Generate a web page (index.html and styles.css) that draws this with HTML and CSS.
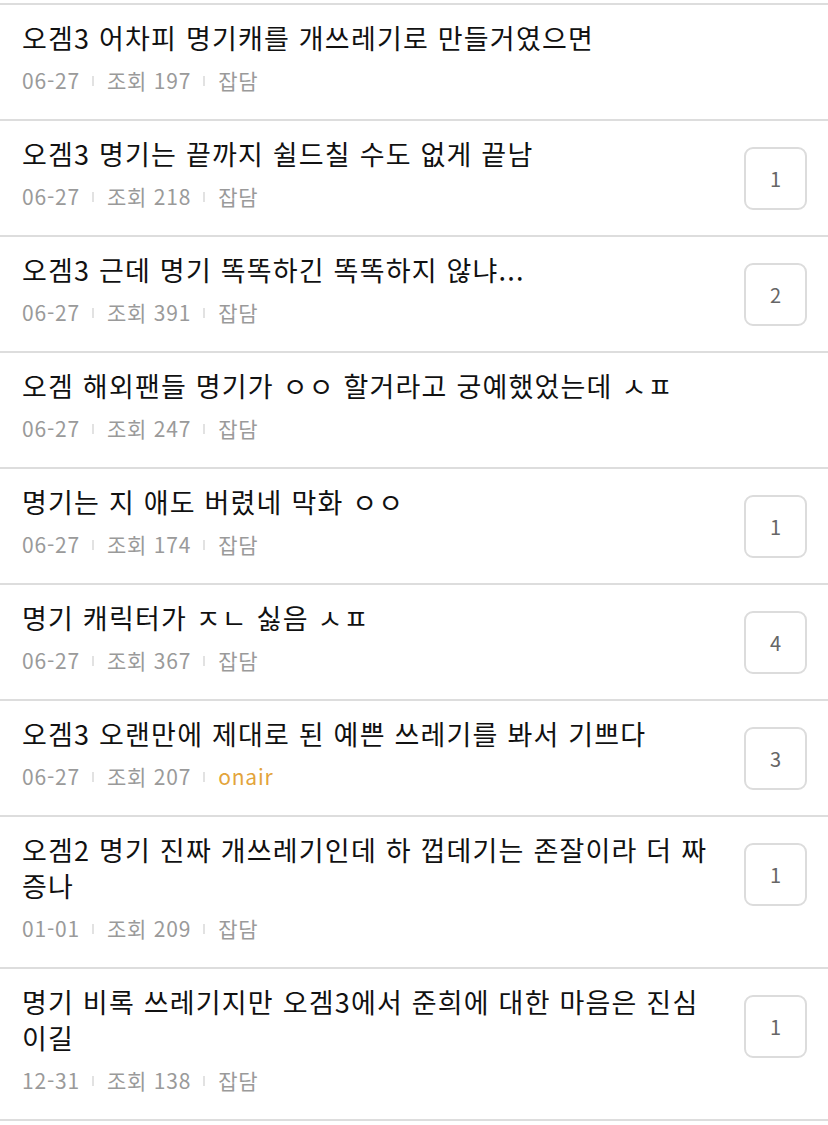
FILE: index.html
```html
<!DOCTYPE html>
<html lang="ko">
  <head>
    <meta charset="UTF-8" />
    <meta name="viewport" content="width=device-width, initial-scale=1.0" />
    <title>게시판</title>
    <link rel="stylesheet" href="styles.css">
  </head>
  <body>
    <ul class="post-list">
      <li class="post">
        <div class="post-body">
          <p class="post-title">오겜3 어차피 명기캐를 개쓰레기로 만들거였으면</p>
          <p class="post-meta"><span>06-27</span><i class="sep"></i><span>조회 197</span><i class="sep"></i><span>잡담</span></p>
        </div>
      </li>
      <li class="post">
        <div class="post-body">
          <p class="post-title">오겜3 명기는 끝까지 쉴드칠 수도 없게 끝남</p>
          <p class="post-meta"><span>06-27</span><i class="sep"></i><span>조회 218</span><i class="sep"></i><span>잡담</span></p>
        </div>
        <span class="reply-count">1</span>
      </li>
      <li class="post">
        <div class="post-body">
          <p class="post-title">오겜3 근데 명기 똑똑하긴 똑똑하지 않냐...</p>
          <p class="post-meta"><span>06-27</span><i class="sep"></i><span>조회 391</span><i class="sep"></i><span>잡담</span></p>
        </div>
        <span class="reply-count">2</span>
      </li>
      <li class="post">
        <div class="post-body">
          <p class="post-title">오겜 해외팬들 명기가 ㅇㅇ 할거라고 궁예했었는데 ㅅㅍ</p>
          <p class="post-meta"><span>06-27</span><i class="sep"></i><span>조회 247</span><i class="sep"></i><span>잡담</span></p>
        </div>
      </li>
      <li class="post">
        <div class="post-body">
          <p class="post-title">명기는 지 애도 버렸네 막화 ㅇㅇ</p>
          <p class="post-meta"><span>06-27</span><i class="sep"></i><span>조회 174</span><i class="sep"></i><span>잡담</span></p>
        </div>
        <span class="reply-count">1</span>
      </li>
      <li class="post">
        <div class="post-body">
          <p class="post-title">명기 캐릭터가 ㅈㄴ 싫음 ㅅㅍ</p>
          <p class="post-meta"><span>06-27</span><i class="sep"></i><span>조회 367</span><i class="sep"></i><span>잡담</span></p>
        </div>
        <span class="reply-count">4</span>
      </li>
      <li class="post">
        <div class="post-body">
          <p class="post-title">오겜3 오랜만에 제대로 된 예쁜 쓰레기를 봐서 기쁘다</p>
          <p class="post-meta"><span>06-27</span><i class="sep"></i><span>조회 207</span><i class="sep"></i><span class="cat-onair">onair</span></p>
        </div>
        <span class="reply-count">3</span>
      </li>
      <li class="post">
        <div class="post-body">
          <p class="post-title">오겜2 명기 진짜 개쓰레기인데 하 껍데기는 존잘이라 더 짜증나</p>
          <p class="post-meta"><span>01-01</span><i class="sep"></i><span>조회 209</span><i class="sep"></i><span>잡담</span></p>
        </div>
        <span class="reply-count">1</span>
      </li>
      <li class="post">
        <div class="post-body">
          <p class="post-title">명기 비록 쓰레기지만 오겜3에서 준희에 대한 마음은 진심이길</p>
          <p class="post-meta"><span>12-31</span><i class="sep"></i><span>조회 138</span><i class="sep"></i><span>잡담</span></p>
        </div>
        <span class="reply-count">1</span>
      </li>
    </ul>
  </body>
</html>
```

FILE: styles.css
```css
body {
  margin: 0;
  background: #fff;
  font-family: "Noto Sans CJK KR", "Noto Sans", sans-serif;
  color: #111;
}
.post-list {
  list-style: none;
  margin: 3px 0 0;
  padding: 0;
  border-bottom: 2px solid #ddd;
}
.post {
  display: flex;
  align-items: flex-start;
  gap: 34px;
  padding: 15px 21px 25px 22px;
  border-top: 2px solid #ddd;
}
.post-body {
  flex: 1;
  min-width: 0;
}
.post-title {
  margin: 0;
  font-size: 27px;
  line-height: 36px;
  letter-spacing: 1.2px;
}
.post-meta {
  display: flex;
  align-items: center;
  height: 28px;
  margin: 10px 0 0;
  font-size: 21px;
  line-height: 28px;
  letter-spacing: 0.8px;
  color: #9a9a9a;
}
.sep {
  width: 2px;
  height: 10px;
  margin: 2px 13px 0 12px;
  background: #e2e2e2;
}
.cat-onair {
  color: #e3a43a;
}
.reply-count {
  flex: none;
  display: flex;
  align-items: center;
  justify-content: center;
  box-sizing: border-box;
  width: 63px;
  height: 63px;
  margin-top: 11px;
  border: 2px solid #dcdcdc;
  border-radius: 9px;
  font-size: 20px;
  color: #666;
}
```
